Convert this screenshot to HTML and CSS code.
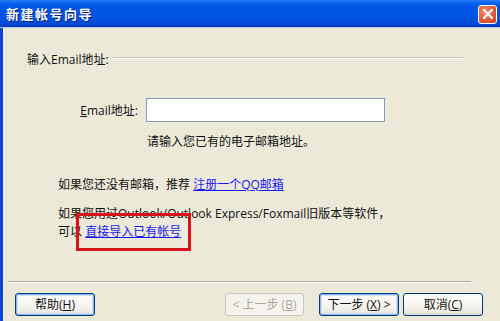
FILE: index.html
```html
<!DOCTYPE html>
<html lang="zh-CN">
<head>
<meta charset="utf-8">
<title>新建帐号向导</title>
<link rel="stylesheet" href="styles.css">
</head>
<body>
<div class="window">
  <div class="titlebar">
    <span class="title">新建帐号向导</span>
    <span class="close" aria-label="关闭">
      <svg width="12" height="12" viewBox="0 0 12 12"><path d="M2 2 L10 10 M10 2 L2 10" stroke="#fff" stroke-width="2.2" stroke-linecap="round"/></svg>
    </span>
  </div>
  <div class="body">
    <div class="group-head">
      <span class="group-label">输入Email地址:</span>
      <span class="group-line"></span>
    </div>
    <div class="email-row">
      <label class="email-label"><u>E</u>mail地址:</label>
      <input class="email-input" type="text">
    </div>
    <div class="hint">请输入您已有的电子邮箱地址。</div>
    <div class="para p1">如果您还没有邮箱，推荐 <a class="link" href="#">注册一个QQ邮箱</a></div>
    <div class="para p2">如果您用过Outlook/Outlook Express/Foxmail旧版本等软件，<br>可以 <span class="mark"><a class="link" href="#">直接导入已有帐号</a></span></div>
    <div class="spacer"></div>
    <div class="sep"></div>
    <div class="buttons">
      <button class="btn btn-focus">帮助(<u>H</u>)</button>
      <div class="right-buttons">
        <button class="btn btn-disabled">&lt; 上一步 (<u>B</u>)</button>
        <button class="btn btn-default">下一步 (<u>X</u>) &gt;</button>
        <button class="btn btn-cancel">取消(<u>C</u>)</button>
      </div>
    </div>
  </div>
</div>
</body>
</html>
```
FILE: styles.css
```css
html, body {
  margin: 0;
  padding: 0;
  width: 500px;
  height: 321px;
  overflow: hidden;
  background: #ece9d8;
}
.window {
  width: 500px;
  height: 321px;
  box-sizing: border-box;
  border-left: 3px solid #0846d8;
  display: flex;
  flex-direction: column;
  font-family: "Open Sans", "Noto Sans CJK SC", sans-serif;
  font-size: 12px;
  color: #111;
}
.titlebar {
  height: 27px;
  flex: none;
  margin-left: -3px;
  display: flex;
  align-items: center;
  justify-content: space-between;
  padding: 0 3px 0 6px;
  background: linear-gradient(#2a7cf4 0%, #0661ee 12%, #0055e5 30%, #0053e1 70%, #0048d2 90%, #003cb8 100%);
  border-bottom: 1px solid #b7c8ea;
}
.title {
  color: #fff;
  font-family: "Noto Sans CJK SC", sans-serif;
  font-weight: bold;
  font-size: 13px;
  letter-spacing: 1.5px;
  text-shadow: 1px 1px 0 #0a1f7a;
}
.close {
  width: 19px;
  height: 19px;
  box-sizing: border-box;
  border: 1px solid #fff;
  border-radius: 3px;
  background: radial-gradient(circle at 35% 35%, #f08a6c, #d9512f 70%, #c2401f);
  display: flex;
  align-items: center;
  justify-content: center;
  margin-top: 1px;
}
.body {
  flex: 1;
  display: flex;
  flex-direction: column;
}
.group-head {
  display: flex;
  align-items: center;
  margin: 24px 37px 0 24px;
  height: 16px;
  line-height: 16px;
}
.group-label {
  flex: none;
  margin-right: 4px;
}
.group-line {
  flex: 1;
  height: 0;
  border-top: 1px solid #c7c4b2;
  border-bottom: 1px solid #fff;
  margin-top: -5px;
}
.email-row {
  display: flex;
  align-items: center;
  margin-top: 30px;
  height: 24px;
}
.email-label {
  width: 143px;
  text-align: right;
  padding-right: 8px;
  box-sizing: border-box;
}
.email-input {
  width: 239px;
  height: 24px;
  box-sizing: border-box;
  border: 1px solid #7f9db9;
  background: #fff;
  margin: 0;
  padding: 0;
}
.hint {
  margin: 12px 0 0 144px;
  line-height: 16px;
}
.para {
  margin-left: 55px;
  line-height: 18px;
}
.p1 { margin-top: 26px; }
.p2 { margin-top: 11px; }
.link {
  color: #1a1aee;
  text-decoration: underline;
}
.mark {
  position: relative;
}
.mark::after {
  content: "";
  position: absolute;
  left: -9px;
  right: -10px;
  top: -10px;
  bottom: -11px;
  border: 3px solid #d8121a;
  pointer-events: none;
}
.spacer { flex: 1; }
.sep {
  margin: 0 29px 0 5px;
  border-top: 1px solid #aca899;
  border-bottom: 1px solid #fff;
}
.buttons {
  display: flex;
  justify-content: space-between;
  align-items: center;
  padding: 10px 17px 5px 12px;
}
.right-buttons {
  display: flex;
  gap: 4px;
}
.right-buttons .btn-disabled { margin-right: 11px; width: 79px; }
.btn-default { width: 82px; }
.btn-cancel { width: 79px; }
.btn {
  width: 80px;
  height: 23px;
  box-sizing: border-box;
  border: 1px solid #003c74;
  border-radius: 3px;
  background: linear-gradient(#ffffff 0%, #f6f5f0 50%, #ecebe4 85%, #d8d5c8 100%);
  font-family: "Open Sans", "Noto Sans CJK SC", sans-serif;
  font-size: 12px;
  color: #111;
  padding: 0;
  line-height: 19px;
}
.btn-focus, .btn-default {
  box-shadow: inset 0 0 0 1px #8fb3ee, inset 0 0 0 2px #cfe0fb;
}
.btn-disabled {
  border-color: #c9c7ba;
  background: #f4f3ee;
  color: #aca899;
}
```
